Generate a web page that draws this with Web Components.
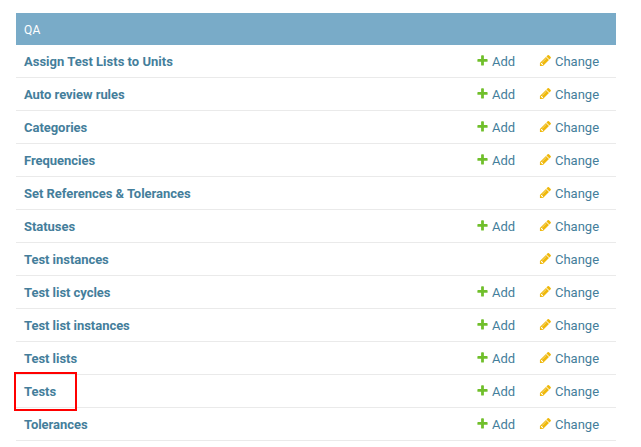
<!DOCTYPE html>
<html lang="en">
<head>
<meta charset="utf-8">
<title>QA administration</title>
<style>
body { margin: 0; padding: 13px 25px 0 16px; background: #fff; font-family: Roboto, "Liberation Sans", sans-serif; font-size: 13px; }
model-row { --name-spacing: -0.04px; }
model-row:first-of-type { --name-spacing: 0.01px; }
</style>
</head>
<body>
<admin-module heading="QA">
  <model-row actions="add change">Assign Test Lists to Units</model-row>
  <model-row actions="add change">Auto review rules</model-row>
  <model-row actions="add change">Categories</model-row>
  <model-row actions="add change">Frequencies</model-row>
  <model-row actions="change">Set References &amp; Tolerances</model-row>
  <model-row actions="add change">Statuses</model-row>
  <model-row actions="change">Test instances</model-row>
  <model-row actions="add change">Test list cycles</model-row>
  <model-row actions="add change">Test list instances</model-row>
  <model-row actions="add change">Test lists</model-row>
  <model-row actions="add change" marked>Tests</model-row>
  <model-row actions="add change">Tolerances</model-row>
</admin-module>
<script>
class AdminModule extends HTMLElement {
  constructor() {
    super();
    this.attachShadow({ mode: 'open' }).innerHTML = `
      <style>
        :host { display: block; width: 600px; }
        header { box-sizing: border-box; height: 32px; padding: 9px 8px 7px; line-height: 16px; font-size: 12px; letter-spacing: 0.2px; background: #79abc8; color: #fff; }
      </style>
      <header></header>
      <slot></slot>`;
  }
  connectedCallback() {
    this.shadowRoot.querySelector('header').textContent = this.getAttribute('heading');
  }
}

const ACTIONS = {
  add: { label: 'Add', color: '#70bf2b', path: 'M1600 796v192q0 40-28 68t-68 28h-416v416q0 40-28 68t-68 28h-192q-40 0-68-28t-28-68v-416h-416q-40 0-68-28t-28-68v-192q0-40 28-68t68-28h416v-416q0-40 28-68t68-28h192q40 0 68 28t28 68v416h416q40 0 68 28t28 68z' },
  change: { label: 'Change', color: '#efb80b', path: 'M491 1536l91-91-235-235-91 91v107h128v128h107zm523-928q0-22-22-22-10 0-17 7l-542 542q-7 7-7 17 0 22 22 22 10 0 17-7l542-542q7-7 7-17zm-54-192l416 416-832 832h-416v-416zm683 96q0 53-37 90l-166 166-416-416 166-165q36-38 90-38 53 0 91 38l235 234q37 39 37 91z' }
};

class ActionLink extends HTMLElement {
  constructor() {
    super();
    this.attachShadow({ mode: 'open' });
  }
  connectedCallback() {
    const a = ACTIONS[this.getAttribute('kind')];
    this.shadowRoot.innerHTML = `
      <style>
        :host { display: flex; gap: 3px; color: #447e9b; line-height: 16px; }
        svg { display: block; width: 13px; height: 13px; flex: none; }
      </style>
      <svg viewBox="0 0 1792 1792" fill="${a.color}"><path d="${a.path}"/></svg>
      <span>${a.label}</span>`;
  }
}

class ModelRow extends HTMLElement {
  constructor() {
    super();
    this.attachShadow({ mode: 'open' });
  }
  connectedCallback() {
    const kinds = this.getAttribute('actions').split(' ');
    this.shadowRoot.innerHTML = `
      <style>
        :host { display: grid; grid-template-columns: 1fr 63px 69px; box-sizing: border-box; height: 33px; padding: 9px 8px 7px; border-bottom: 1px solid #eaeaea; line-height: 16px; color: #447e9b; position: relative; }
        .name { font-weight: 700; letter-spacing: var(--name-spacing); }
        .add { grid-column: 2; }
        .change { grid-column: 3; }
        :host([marked])::after { content: ""; position: absolute; left: -2px; top: -3px; width: 63px; height: 39px; box-sizing: border-box; border: 2px solid #f00; z-index: 1; }
      </style>
      <span class="name"><slot></slot></span>
      ${kinds.map(k => `<action-link class="${k}" kind="${k}"></action-link>`).join('')}`;
  }
}

customElements.define('admin-module', AdminModule);
customElements.define('action-link', ActionLink);
customElements.define('model-row', ModelRow);
</script>
</body>
</html>
